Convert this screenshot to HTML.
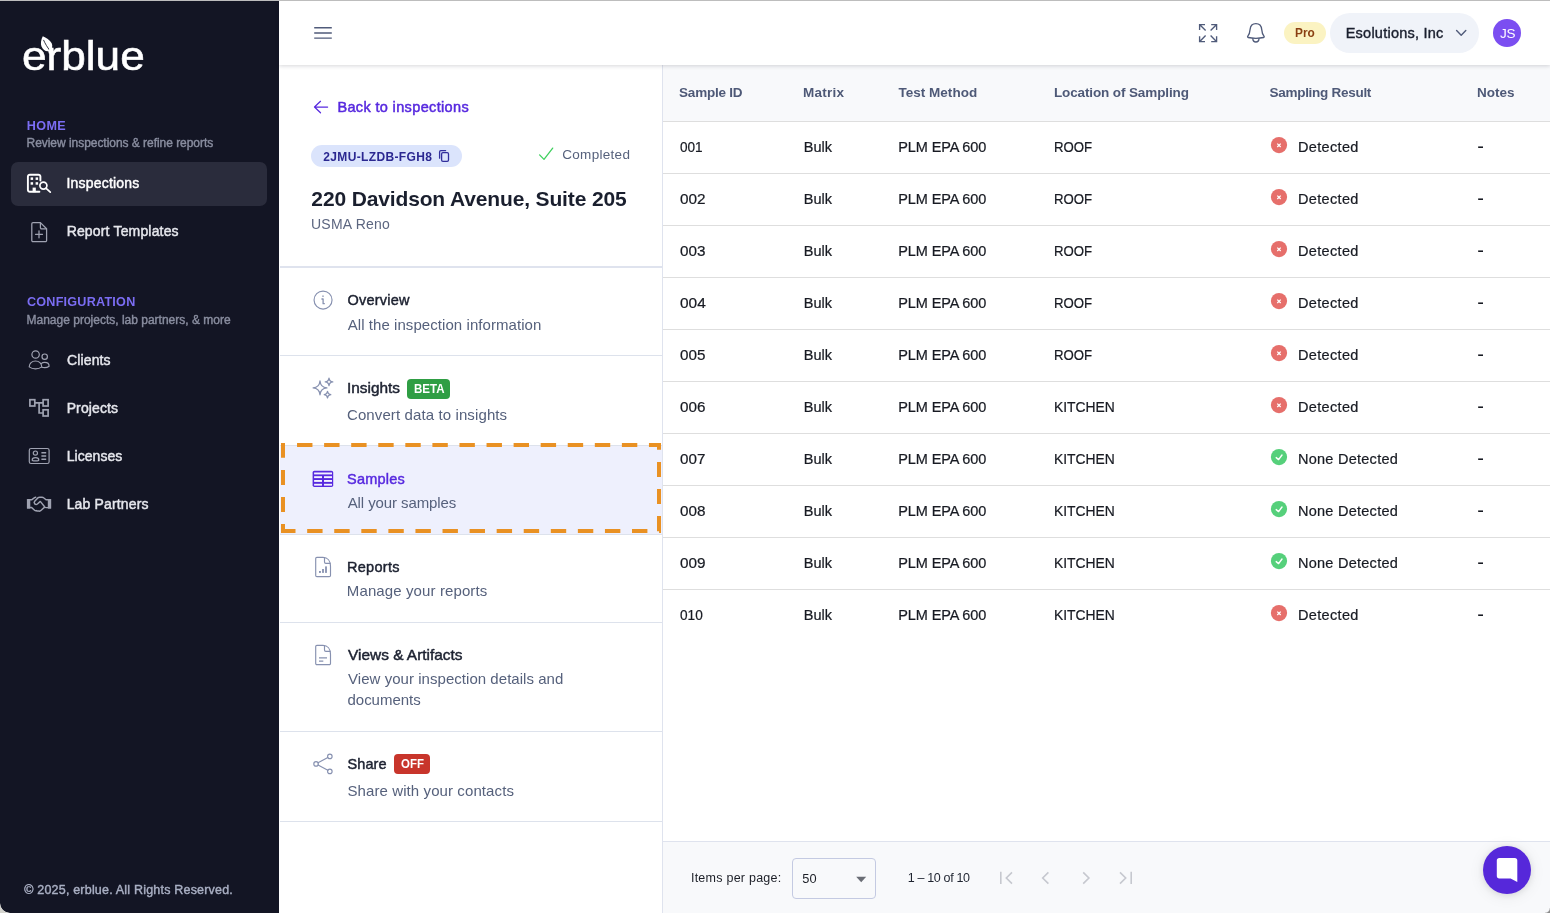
<!DOCTYPE html>
<html lang="en">
<head>
<meta charset="utf-8">
<title>erblue - Samples</title>
<style>
*{box-sizing:border-box;margin:0;padding:0}
html,body{width:1550px;height:913px;overflow:hidden;background:#fff}
body{font-family:"Liberation Sans",sans-serif;color:#1f2430;position:relative}
.abs{position:absolute}
.t{position:absolute;white-space:nowrap;line-height:1}
#txt{position:absolute;left:0;top:0;width:1550px;height:913px;will-change:transform;z-index:20}
svg{position:absolute;overflow:visible}
#topline{left:0;top:0;width:1550px;height:1px;background:#bdbdbd;z-index:50}
#sidebar{left:0;top:1px;width:279px;height:912px;background:#131524;border-radius:0 0 0 10px}
#active{left:11px;top:162px;width:256px;height:44px;border-radius:7px;background:#2a2c3c}
#topbar{left:279px;top:1px;width:1271px;height:64px;background:#fff;box-shadow:0 1px 4px rgba(10,12,30,.17);z-index:10}
#mid{left:279px;top:65px;width:384px;height:848px;background:#fff;border-right:1px solid #dfe3ee}
.hr{position:absolute;left:280px;width:382px;height:1px;background:#dde2ec}
#thead{left:663px;top:65px;width:887px;height:57px;background:#f8f9fb;border-bottom:1px solid #dedede}
.row{position:absolute;left:663px;width:887px;height:1px;background:#dedede}
#tfoot{left:663px;top:841px;width:887px;height:72px;background:#f8f9fb;border-top:1px solid #dfe3ee}
</style>
</head>
<body>
<div id="topline" class="abs"></div>
<!-- SIDEBAR -->
<div id="sidebar" class="abs"></div>
<div id="active" class="abs"></div>
<svg style="left:0;top:0" width="279" height="100" viewBox="0 0 279 100"><path d="M42.8 36.2 C46 37.4 50 39.9 51.7 43.2 C52.9 45.8 52.1 48.7 50.5 51 L50 53.6 L48.8 53.6 L48.3 51.3 C45.7 51.7 42.9 49.9 41.5 46.6 C40.3 43.6 41.1 39.4 42.8 36.2 Z" fill="#fff"/><path d="M43.5 39.9 C45.1 43.6 47.4 47.3 49.8 50.4" stroke="#131524" stroke-width="0.85" fill="none"/></svg>
<svg style="left:0;top:0" width="279" height="913" viewBox="0 0 279 913" fill="none" stroke-linecap="round" stroke-linejoin="round">
<!-- inspections -->
<g stroke="#fff" stroke-width="1.9">
<path d="M40.4 180.6 V176.6 a1.9 1.9 0 0 0 -1.9 -1.9 H29.8 a1.9 1.9 0 0 0 -1.9 1.9 V189.9 a1.9 1.9 0 0 0 1.9 1.9 H39.4"/>
<circle cx="43.4" cy="185.6" r="3.5" stroke-width="1.7"/>
<path d="M46.1 188.3 L50.3 192.2" stroke-width="1.7"/>
</g>
<g fill="#fff" stroke="none">
<rect x="30.6" y="177.4" width="2.5" height="2.5"/><rect x="35.6" y="177.4" width="2.5" height="2.5"/>
<rect x="30.6" y="182.2" width="2.5" height="2.5"/><rect x="35.6" y="182.2" width="2.5" height="2.5"/>
<rect x="32.6" y="187.6" width="3.2" height="4.6"/>
</g>
<!-- report templates -->
<g stroke="#9fa2b1" stroke-width="1.25">
<path d="M40.4 222.6 H33 a1.2 1.2 0 0 0 -1.2 1.2 V240.4 a1.2 1.2 0 0 0 1.2 1.2 H45.4 a1.2 1.2 0 0 0 1.2 -1.2 V228.8 Z"/>
<path d="M40.4 222.8 V227.6 a1.2 1.2 0 0 0 1.2 1.2 H46.4"/>
<path d="M39 230.8 V237.8 M35.5 234.3 H42.5"/>
</g>
<!-- clients -->
<g stroke="#9fa2b1" stroke-width="1.2">
<circle cx="35.6" cy="354.5" r="3.7"/>
<circle cx="44.7" cy="356.7" r="2.7"/>
<path d="M29.2 366.9 C29.2 363.4 32 361 35.5 361 C39 361 41.8 363.4 41.8 366.9 C40 368.3 37.8 368.9 35.5 368.9 C33.2 368.9 31 368.3 29.2 366.9 Z"/>
<path d="M41.2 363.6 C42.1 362.8 43.3 362.4 44.7 362.4 C47.3 362.4 49.1 364 49.1 366.2 C47.8 367.2 46.3 367.6 44.7 367.6 C43.6 367.6 42.7 367.5 41.9 367.2"/>
</g>
<!-- projects -->
<g stroke="#9fa2b1" stroke-width="1.7" stroke-linejoin="miter" stroke-linecap="butt">
<rect x="29.9" y="399.7" width="4.9" height="6.3"/>
<rect x="43.1" y="399.7" width="5" height="6.3"/>
<rect x="43.1" y="409.8" width="5" height="6.2"/>
<path d="M35 402.9 H43 M39.1 402.9 V413 H43"/>
</g>
<!-- licenses -->
<g stroke="#9fa2b1" stroke-width="1.2">
<rect x="29.3" y="448.5" width="19.8" height="15" rx="1.8"/>
<circle cx="35.4" cy="453.1" r="2.1"/>
<path d="M32.2 459.9 C32.2 458.6 33.7 457.7 35.5 457.7 C37.3 457.7 38.8 458.6 38.8 459.9 C38.8 460.6 37.3 460.9 35.5 460.9 C33.7 460.9 32.2 460.6 32.2 459.9 Z"/>
<path d="M41.4 452.7 H46.2 M41.4 456 H46.2 M41.4 459.2 H46.2" stroke-width="1.5" stroke-linecap="butt"/>
</g>
<!-- lab partners -->
<g stroke="#9fa2b1" stroke-width="1.45">
<path d="M30.2 499.8 H31.6 L34.6 497.6 Q35.2 497.25 35.7 497.2"/>
<path d="M48 499.8 H46 L43.6 497.8 Q43 497.2 42 497.2 H39.6 Q38.6 497.2 37.8 497.9 L34.7 501.2 Q33.6 502.6 34.7 503.9 Q36 505 37.4 504 L40.3 501.4 L44.2 506.2 Q44.8 507.4 46 507.6 H48"/>
<path d="M30.2 507.4 H31.4 L34.6 510.2 Q35.4 510.9 36.4 510.6 Q37.2 511.3 38.4 510.9 Q39.4 511.5 40.6 510.7 L44.4 507.4"/>
</g>
<g fill="#9fa2b1" stroke="none"><rect x="26.9" y="498.9" width="3.4" height="9.8" rx="0.5"/><rect x="47.8" y="498.9" width="3.4" height="9.8" rx="0.5"/></g>
</svg>
<!-- TOPBAR -->
<div id="topbar" class="abs"></div>
<div class="abs" style="z-index:11;left:1284px;top:22px;width:42px;height:22px;border-radius:11px;background:#fbf3c2"></div>
<div class="abs" style="z-index:11;left:1330px;top:13px;width:149px;height:40px;border-radius:20px;background:#f0f3f9"></div>
<div class="abs" style="z-index:11;left:1493px;top:19px;width:28px;height:28px;border-radius:14px;background:#7b4ef1"></div>
<svg style="left:279px;top:0;z-index:12" width="1271" height="65" viewBox="279 0 1271 65" fill="none" stroke-linecap="round" stroke-linejoin="round">
<path d="M314.2 27.7 H331.8 M314.2 32.9 H331.8 M314.2 38.1 H331.8" stroke="#505b7a" stroke-width="1.45" stroke-linecap="butt"/>
<g stroke="#505b7a" stroke-width="1.35" stroke-linecap="butt" stroke-linejoin="miter">
<path d="M1199.6 30 V24.6 H1205 M1199.8 24.8 L1205.6 30.6"/>
<path d="M1216.6 30 V24.6 H1211.2 M1216.4 24.8 L1210.6 30.6"/>
<path d="M1199.6 36.2 V41.6 H1205 M1199.8 41.4 L1205.6 35.6"/>
<path d="M1216.6 36.2 V41.6 H1211.2 M1216.4 41.4 L1210.6 35.6"/>
</g>
<g stroke="#505b7a" stroke-width="1.3">
<path d="M1255.9 23.6 C1252.4 23.6 1250.4 26 1250.1 29.4 C1249.9 32.4 1249.4 34.4 1247.7 36.4 C1247.4 36.9 1247.6 37.4 1248.2 37.5 C1250.8 38.1 1253.4 38.3 1255.9 38.3 C1258.4 38.3 1261 38.1 1263.6 37.5 C1264.2 37.4 1264.4 36.9 1264.1 36.4 C1262.4 34.4 1261.9 32.4 1261.7 29.4 C1261.4 26 1259.4 23.6 1255.9 23.6 Z"/>
<path d="M1252.8 38.6 C1252.9 40.6 1254.2 42 1255.9 42 C1257.6 42 1258.9 40.6 1259 38.6"/>
</g>
<path d="M1456.6 30.6 L1461.2 35.3 L1465.8 30.6" stroke="#505b7a" stroke-width="1.4"/>
</svg>
<!-- MID -->
<div id="mid" class="abs"></div>
<div class="abs" style="left:311px;top:145px;width:151px;height:22px;border-radius:11px;background:#dbe4fc"></div>
<div class="hr" style="top:266px;height:2px;background:#dfe3ee"></div>
<div class="hr" style="top:355px"></div>
<div class="hr" style="top:445px"></div>
<div class="hr" style="top:534px"></div>
<div class="hr" style="top:622px"></div>
<div class="hr" style="top:731px"></div>
<div class="hr" style="top:821px"></div>
<div class="abs" style="left:280px;top:446px;width:382px;height:88px;background:#eef0fd"></div>
<svg style="left:0;top:0" width="1550" height="913" viewBox="0 0 1550 913"><path d="M297.05 443.00h15.40v4.00h-15.40zM324.12 443.00h15.40v4.00h-15.40zM351.19 443.00h15.40v4.00h-15.40zM378.26 443.00h15.40v4.00h-15.40zM405.33 443.00h15.40v4.00h-15.40zM432.40 443.00h15.40v4.00h-15.40zM459.47 443.00h15.40v4.00h-15.40zM486.54 443.00h15.40v4.00h-15.40zM513.61 443.00h15.40v4.00h-15.40zM540.68 443.00h15.40v4.00h-15.40zM567.75 443.00h15.40v4.00h-15.40zM594.82 443.00h15.40v4.00h-15.40zM621.89 443.00h15.40v4.00h-15.40zM648.96 443.00h12.04v4.00h-12.04zM281.00 529.00h14.50v4.00h-14.50zM307.17 529.00h15.40v4.00h-15.40zM334.24 529.00h15.40v4.00h-15.40zM361.31 529.00h15.40v4.00h-15.40zM388.38 529.00h15.40v4.00h-15.40zM415.45 529.00h15.40v4.00h-15.40zM442.52 529.00h15.40v4.00h-15.40zM469.59 529.00h15.40v4.00h-15.40zM496.66 529.00h15.40v4.00h-15.40zM523.73 529.00h15.40v4.00h-15.40zM550.80 529.00h15.40v4.00h-15.40zM577.87 529.00h15.40v4.00h-15.40zM604.94 529.00h15.40v4.00h-15.40zM632.01 529.00h15.40v4.00h-15.40zM659.08 529.00h1.92v4.00h-1.92zM281.00 443.00h4.00v14.70h-4.00zM281.00 469.90h4.00v15.10h-4.00zM281.00 496.90h4.00v15.10h-4.00zM281.00 524.00h4.00v9.00h-4.00zM657.00 443.00h4.00v6.80h-4.00zM657.00 462.10h4.00v14.80h-4.00zM657.00 489.10h4.00v14.90h-4.00zM657.00 516.00h4.00v15.30h-4.00z" fill="#e99123"/></svg>
<div class="abs" style="left:407px;top:379px;width:43px;height:20px;border-radius:4px;background:#2f9e44"></div>
<div class="abs" style="left:394px;top:754px;width:36px;height:20px;border-radius:4px;background:#c8352b"></div>
<svg style="left:0;top:0" width="1550" height="913" viewBox="0 0 1550 913" fill="none" stroke-linecap="round" stroke-linejoin="round">
<path d="M327.6 107.05 H314.6 M320.5 101.3 L314.5 107.05 L320.5 112.8" stroke="#5729df" stroke-width="1.25"/>
<g stroke="#312e9c" stroke-width="1.3">
<rect x="441.6" y="152.6" width="6.9" height="8.7" rx="1.3"/>
<path d="M439.6 158.2 V151.9 a1.2 1.2 0 0 1 1.2 -1.2 H445.6"/>
</g>
<path d="M539.6 154.9 L544 159.4 L552.7 148.1" stroke="#3fd05e" stroke-width="1.3"/>
<g stroke="#8791b0" stroke-width="1.15">
<circle cx="323.05" cy="300.05" r="9"/>
<path d="M321.9 299 H323.1 V303.7 H324.3" stroke-width="1.3"/>
<path d="M323 296 V296.4" stroke-width="1.3"/>
<path d="M320 381.0 Q320.55 387.35 326.9 387.9 Q320.55 388.45 320 394.79999999999995 Q319.45 388.45 313.1 387.9 Q319.45 387.35 320 381.0 Z" stroke-width="1.3"/>
<path d="M329 378.09999999999997 Q329.38 381.52 332.8 381.9 Q329.38 382.28 329 385.7 Q328.62 382.28 325.2 381.9 Q328.62 381.52 329 378.09999999999997 Z" stroke-width="1.25"/>
<path d="M327.5 391.3 Q327.83 394.27 330.8 394.6 Q327.83 394.93 327.5 397.90000000000003 Q327.17 394.93 324.2 394.6 Q327.17 394.27 327.5 391.3 Z" stroke-width="1.25"/>
<path d="M316.9 557.35 H323 C327.6 557.35 330.5 561 330.5 566.4 V575.4 a1.2 1.2 0 0 1 -1.2 1.2 H316.9 a1.2 1.2 0 0 1 -1.2 -1.2 V558.55 a1.2 1.2 0 0 1 1.2 -1.2 Z"/><path d="M324.5 557.9 V562 a1.3 1.3 0 0 0 1.3 1.3 H329.9"/>
<path d="M316.9 645.35 H323 C327.6 645.35 330.5 649 330.5 654.4 V663.4 a1.2 1.2 0 0 1 -1.2 1.2 H316.9 a1.2 1.2 0 0 1 -1.2 -1.2 V646.55 a1.2 1.2 0 0 1 1.2 -1.2 Z"/><path d="M324.5 645.9 V650 a1.3 1.3 0 0 0 1.3 1.3 H329.9"/>
<path d="M319 657.9 H327 M319 661.1 H323.3" stroke-width="1.25" stroke-linecap="butt"/>
<circle cx="316.05" cy="763.9" r="2.25"/><circle cx="329.85" cy="756.4" r="2.25"/><circle cx="329.85" cy="771.4" r="2.25"/>
<path d="M318.05 762.8 L327.85 757.5 M318.05 765 L327.85 770.3"/>
</g>
<g fill="#8791b0"><rect x="319" y="571" width="1.9" height="1.9"/><rect x="322.1" y="569" width="1.8" height="3.9"/><rect x="325.1" y="566.4" width="1.8" height="6.5"/></g>
<!-- samples table icon -->
<rect x="312.6" y="470.8" width="20.6" height="16.2" rx="1.8" fill="#5729df"/>
<g fill="#f3f2ff"><rect x="314.1" y="472.5" width="17.9" height="1.9"/>
<rect x="314.1" y="476.2" width="7.9" height="1.9"/><rect x="324" y="476.2" width="8" height="1.9"/>
<rect x="314.1" y="480" width="7.9" height="1.9"/><rect x="324" y="480" width="8" height="1.9"/>
<rect x="314.1" y="483.8" width="7.9" height="1.8"/><rect x="324" y="483.8" width="8" height="1.8"/></g>
</svg>
<!-- TABLE -->
<div id="thead" class="abs"></div>
<div class="row" style="top:173px"></div>
<div class="row" style="top:225px"></div>
<div class="row" style="top:277px"></div>
<div class="row" style="top:329px"></div>
<div class="row" style="top:381px"></div>
<div class="row" style="top:433px"></div>
<div class="row" style="top:485px"></div>
<div class="row" style="top:537px"></div>
<div class="row" style="top:589px"></div>
<svg style="left:0;top:0" width="1550" height="913" viewBox="0 0 1550 913"><circle cx="1279" cy="145.1" r="8.1" fill="#e66f6b"/><path d="M1277.3 143.6 l3.4 3.4 M1280.7 143.6 l-3.4 3.4" stroke="#fff" stroke-width="1.3" fill="none"/><circle cx="1279" cy="197.1" r="8.1" fill="#e66f6b"/><path d="M1277.3 195.6 l3.4 3.4 M1280.7 195.6 l-3.4 3.4" stroke="#fff" stroke-width="1.3" fill="none"/><circle cx="1279" cy="249.1" r="8.1" fill="#e66f6b"/><path d="M1277.3 247.6 l3.4 3.4 M1280.7 247.6 l-3.4 3.4" stroke="#fff" stroke-width="1.3" fill="none"/><circle cx="1279" cy="301.1" r="8.1" fill="#e66f6b"/><path d="M1277.3 299.6 l3.4 3.4 M1280.7 299.6 l-3.4 3.4" stroke="#fff" stroke-width="1.3" fill="none"/><circle cx="1279" cy="353.1" r="8.1" fill="#e66f6b"/><path d="M1277.3 351.6 l3.4 3.4 M1280.7 351.6 l-3.4 3.4" stroke="#fff" stroke-width="1.3" fill="none"/><circle cx="1279" cy="405.1" r="8.1" fill="#e66f6b"/><path d="M1277.3 403.6 l3.4 3.4 M1280.7 403.6 l-3.4 3.4" stroke="#fff" stroke-width="1.3" fill="none"/><circle cx="1279" cy="457.1" r="8.1" fill="#56d07b"/><path d="M1276.2 457.6 l2.4 2 l3.4 -4.6" stroke="#fff" stroke-width="1.4" fill="none" stroke-linecap="round" stroke-linejoin="round"/><circle cx="1279" cy="509.1" r="8.1" fill="#56d07b"/><path d="M1276.2 509.6 l2.4 2 l3.4 -4.6" stroke="#fff" stroke-width="1.4" fill="none" stroke-linecap="round" stroke-linejoin="round"/><circle cx="1279" cy="561.1" r="8.1" fill="#56d07b"/><path d="M1276.2 561.6 l2.4 2 l3.4 -4.6" stroke="#fff" stroke-width="1.4" fill="none" stroke-linecap="round" stroke-linejoin="round"/><circle cx="1279" cy="613.1" r="8.1" fill="#e66f6b"/><path d="M1277.3 611.6 l3.4 3.4 M1280.7 611.6 l-3.4 3.4" stroke="#fff" stroke-width="1.3" fill="none"/></svg>
<div id="tfoot" class="abs"></div>
<div class="abs" style="left:792px;top:858px;width:84px;height:41px;border:1px solid #c4cae2;border-radius:4px"></div>
<svg style="left:0;top:0" width="1550" height="913" viewBox="0 0 1550 913" fill="none">
<path d="M856.2 876.8 h10 l-5 5.4z" fill="#6a6d75"/>
<g stroke="#c6c8cf" stroke-width="1.6">
<path d="M1000.8 871.8 V884 M1012 872.4 L1006.3 878 L1012 883.6"/>
<path d="M1048.4 872.4 L1042.7 878 L1048.4 883.6"/>
<path d="M1083.2 872.4 L1088.9 878 L1083.2 883.6"/>
<path d="M1120 872.4 L1125.7 878 L1120 883.6 M1131.2 871.8 V884"/>
</g>
</svg>
<div class="abs" style="left:1483px;top:846px;width:48px;height:48px;border-radius:24px;background:#5628da;box-shadow:0 1px 6px rgba(0,0,0,.10),0 2px 16px rgba(0,0,0,.08)"></div>
<svg style="left:0;top:0" width="1550" height="913" viewBox="0 0 1550 913"><path d="M1499.4 858 H1514.7 a2.6 2.6 0 0 1 2.6 2.6 V881.9 L1510.6 878.4 H1499.4 a2.6 2.6 0 0 1 -2.6 -2.6 V860.6 a2.6 2.6 0 0 1 2.6 -2.6 Z" fill="#fff"/></svg>
<div class="abs" style="left:0;top:903px;width:10px;height:10px;background:radial-gradient(circle at 10px 0,rgba(0,0,0,0) 9.5px,#d4d4ce 10.5px);z-index:60"></div>
<div class="abs" style="left:1545px;top:908px;width:5px;height:5px;background:radial-gradient(circle at 0 0,rgba(0,0,0,0) 4.2px,#8c8c8c 5.4px);z-index:60"></div>
<!-- TEXT LAYER -->
<div id="txt">
<div class="t" style="left:22.02px;top:35.94px;font-size:40px;color:#fff;-webkit-text-stroke:0.55px;transform:scaleX(1.1037);transform-origin:0 0;">erblue</div>
<div class="t" style="left:26.66px;top:119.53px;font-size:12.6px;color:#7b6df3;font-weight:700;letter-spacing:0.418px;">HOME</div>
<div class="t" style="left:26.52px;top:136.84px;font-size:12px;color:#8a8ea0;letter-spacing:-0.040px;-webkit-text-stroke:0.4px;">Review inspections &amp; refine reports</div>
<div class="t" style="left:26.98px;top:295.83px;font-size:12.6px;color:#7b6df3;font-weight:700;letter-spacing:0.238px;">CONFIGURATION</div>
<div class="t" style="left:26.52px;top:313.84px;font-size:12px;color:#8a8ea0;letter-spacing:0.000px;-webkit-text-stroke:0.4px;">Manage projects, lab partners, &amp; more</div>
<div class="t" style="left:66.51px;top:176.15px;font-size:14px;color:#ffffff;letter-spacing:0.197px;-webkit-text-stroke:0.45px;">Inspections</div>
<div class="t" style="left:66.65px;top:224.15px;font-size:14px;color:#e6e7ed;letter-spacing:0.166px;-webkit-text-stroke:0.45px;">Report Templates</div>
<div class="t" style="left:67.09px;top:353.15px;font-size:14px;color:#e6e7ed;letter-spacing:0.120px;-webkit-text-stroke:0.45px;">Clients</div>
<div class="t" style="left:66.65px;top:401.15px;font-size:14px;color:#e6e7ed;letter-spacing:0.125px;-webkit-text-stroke:0.45px;">Projects</div>
<div class="t" style="left:66.65px;top:449.15px;font-size:14px;color:#e6e7ed;letter-spacing:0.056px;-webkit-text-stroke:0.45px;">Licenses</div>
<div class="t" style="left:66.65px;top:497.15px;font-size:14px;color:#e6e7ed;letter-spacing:0.162px;-webkit-text-stroke:0.45px;">Lab Partners</div>
<div class="t" style="left:24.21px;top:884.42px;font-size:12.5px;color:#aab0c4;letter-spacing:0.198px;-webkit-text-stroke:0.4px;">© 2025, erblue. All Rights Reserved.</div>
<div class="t" style="left:1295.01px;top:27.25px;font-size:12.7px;color:#8a3f12;font-weight:700;transform:scaleX(0.9338);transform-origin:0 0;z-index:12;">Pro</div>
<div class="t" style="left:1345.71px;top:25.73px;font-size:14.5px;color:#1a1f2e;letter-spacing:0.240px;-webkit-text-stroke:0.4px;z-index:12;">Esolutions, Inc</div>
<div class="t" style="left:1499.89px;top:26.57px;font-size:13.5px;color:#fff;letter-spacing:-0.135px;z-index:12;">JS</div>
<div class="t" style="left:337.41px;top:99.53px;font-size:14.5px;color:#5729df;letter-spacing:0.354px;-webkit-text-stroke:0.5px;">Back to inspections</div>
<div class="t" style="left:323.28px;top:150.64px;font-size:12px;color:#2b2891;font-weight:700;letter-spacing:0.360px;">2JMU-LZDB-FGH8</div>
<div class="t" style="left:562.21px;top:148.17px;font-size:13.5px;color:#56617c;letter-spacing:0.307px;">Completed</div>
<div class="t" style="left:311.37px;top:188.42px;font-size:21px;color:#1a1f2e;font-weight:700;letter-spacing:-0.142px;">220 Davidson Avenue, Suite 205</div>
<div class="t" style="left:311.02px;top:217.15px;font-size:14px;color:#5c6680;letter-spacing:0.215px;">USMA Reno</div>
<div class="t" style="left:347.41px;top:292.63px;font-size:14.5px;color:#1c2130;letter-spacing:0.245px;-webkit-text-stroke:0.45px;">Overview</div>
<div class="t" style="left:347.67px;top:317.30px;font-size:15px;color:#56617c;letter-spacing:0.066px;">All the inspection information</div>
<div class="t" style="left:346.68px;top:380.93px;font-size:14.5px;color:#1c2130;-webkit-text-stroke:0.45px;transform:scaleX(1.0619);transform-origin:0 0;">Insights</div>
<div class="t" style="left:413.53px;top:382.30px;font-size:13px;color:#fff;font-weight:700;transform:scaleX(0.8879);transform-origin:0 0;">BETA</div>
<div class="t" style="left:346.94px;top:406.80px;font-size:15px;color:#56617c;letter-spacing:0.113px;">Convert data to insights</div>
<div class="t" style="left:347.04px;top:471.83px;font-size:14.5px;color:#5729df;letter-spacing:0.210px;-webkit-text-stroke:0.45px;">Samples</div>
<div class="t" style="left:347.67px;top:495.30px;font-size:15px;color:#56617c;letter-spacing:-0.092px;">All your samples</div>
<div class="t" style="left:346.91px;top:559.83px;font-size:14.5px;color:#1c2130;letter-spacing:0.322px;-webkit-text-stroke:0.45px;">Reports</div>
<div class="t" style="left:346.87px;top:583.30px;font-size:15px;color:#56617c;letter-spacing:0.109px;">Manage your reports</div>
<div class="t" style="left:348.03px;top:648.03px;font-size:14.5px;color:#1c2130;-webkit-text-stroke:0.45px;transform:scaleX(1.0632);transform-origin:0 0;">Views &amp; Artifacts</div>
<div class="t" style="left:348.03px;top:671.00px;font-size:15px;color:#56617c;letter-spacing:0.042px;">View your inspection details and</div>
<div class="t" style="left:347.47px;top:692.10px;font-size:15px;color:#56617c;letter-spacing:-0.013px;">documents</div>
<div class="t" style="left:347.44px;top:756.93px;font-size:14.5px;color:#1c2130;letter-spacing:0.125px;-webkit-text-stroke:0.45px;">Share</div>
<div class="t" style="left:401.03px;top:757.56px;font-size:12.8px;color:#fff;font-weight:700;transform:scaleX(0.8943);transform-origin:0 0;">OFF</div>
<div class="t" style="left:347.42px;top:783.00px;font-size:15px;color:#56617c;letter-spacing:0.099px;">Share with your contacts</div>
<div class="t" style="left:679.11px;top:85.57px;font-size:13.5px;color:#4e5977;font-weight:700;letter-spacing:-0.241px;">Sample ID</div>
<div class="t" style="left:803.00px;top:85.57px;font-size:13.5px;color:#4e5977;font-weight:700;letter-spacing:0.247px;">Matrix</div>
<div class="t" style="left:898.45px;top:85.57px;font-size:13.5px;color:#4e5977;font-weight:700;letter-spacing:0.024px;">Test Method</div>
<div class="t" style="left:1053.90px;top:85.57px;font-size:13.5px;color:#4e5977;font-weight:700;letter-spacing:-0.118px;">Location of Sampling</div>
<div class="t" style="left:1269.51px;top:85.57px;font-size:13.5px;color:#4e5977;font-weight:700;letter-spacing:-0.279px;">Sampling Result</div>
<div class="t" style="left:1477.10px;top:85.57px;font-size:13.5px;color:#4e5977;font-weight:700;letter-spacing:-0.015px;">Notes</div>
<div class="t" style="left:679.67px;top:139.63px;font-size:14.5px;color:#181b23;-webkit-text-stroke:0.22px;transform:scaleX(0.9377);transform-origin:0 0;">001</div>
<div class="t" style="left:803.81px;top:139.63px;font-size:14.5px;color:#181b23;letter-spacing:-0.017px;-webkit-text-stroke:0.22px;">Bulk</div>
<div class="t" style="left:898.21px;top:139.63px;font-size:14.5px;color:#181b23;letter-spacing:-0.105px;-webkit-text-stroke:0.22px;">PLM EPA 600</div>
<div class="t" style="left:1054.42px;top:139.63px;font-size:14.5px;color:#181b23;-webkit-text-stroke:0.22px;transform:scaleX(0.9098);transform-origin:0 0;">ROOF</div>
<div class="t" style="left:1297.91px;top:139.63px;font-size:14.5px;color:#181b23;letter-spacing:0.354px;-webkit-text-stroke:0.22px;">Detected</div>
<div class="t" style="left:1477.16px;top:135.77px;font-size:20px;color:#181b23;">-</div>
<div class="t" style="left:679.60px;top:191.63px;font-size:14.5px;color:#181b23;-webkit-text-stroke:0.22px;transform:scaleX(1.0564);transform-origin:0 0;">002</div>
<div class="t" style="left:803.81px;top:191.63px;font-size:14.5px;color:#181b23;letter-spacing:-0.017px;-webkit-text-stroke:0.22px;">Bulk</div>
<div class="t" style="left:898.21px;top:191.63px;font-size:14.5px;color:#181b23;letter-spacing:-0.105px;-webkit-text-stroke:0.22px;">PLM EPA 600</div>
<div class="t" style="left:1054.42px;top:191.63px;font-size:14.5px;color:#181b23;-webkit-text-stroke:0.22px;transform:scaleX(0.9098);transform-origin:0 0;">ROOF</div>
<div class="t" style="left:1297.91px;top:191.63px;font-size:14.5px;color:#181b23;letter-spacing:0.354px;-webkit-text-stroke:0.22px;">Detected</div>
<div class="t" style="left:1477.16px;top:187.77px;font-size:20px;color:#181b23;">-</div>
<div class="t" style="left:679.60px;top:243.63px;font-size:14.5px;color:#181b23;-webkit-text-stroke:0.22px;transform:scaleX(1.0522);transform-origin:0 0;">003</div>
<div class="t" style="left:803.81px;top:243.63px;font-size:14.5px;color:#181b23;letter-spacing:-0.017px;-webkit-text-stroke:0.22px;">Bulk</div>
<div class="t" style="left:898.21px;top:243.63px;font-size:14.5px;color:#181b23;letter-spacing:-0.105px;-webkit-text-stroke:0.22px;">PLM EPA 600</div>
<div class="t" style="left:1054.42px;top:243.63px;font-size:14.5px;color:#181b23;-webkit-text-stroke:0.22px;transform:scaleX(0.9098);transform-origin:0 0;">ROOF</div>
<div class="t" style="left:1297.91px;top:243.63px;font-size:14.5px;color:#181b23;letter-spacing:0.354px;-webkit-text-stroke:0.22px;">Detected</div>
<div class="t" style="left:1477.16px;top:239.77px;font-size:20px;color:#181b23;">-</div>
<div class="t" style="left:679.60px;top:295.63px;font-size:14.5px;color:#181b23;-webkit-text-stroke:0.22px;transform:scaleX(1.0641);transform-origin:0 0;">004</div>
<div class="t" style="left:803.81px;top:295.63px;font-size:14.5px;color:#181b23;letter-spacing:-0.017px;-webkit-text-stroke:0.22px;">Bulk</div>
<div class="t" style="left:898.21px;top:295.63px;font-size:14.5px;color:#181b23;letter-spacing:-0.105px;-webkit-text-stroke:0.22px;">PLM EPA 600</div>
<div class="t" style="left:1054.42px;top:295.63px;font-size:14.5px;color:#181b23;-webkit-text-stroke:0.22px;transform:scaleX(0.9098);transform-origin:0 0;">ROOF</div>
<div class="t" style="left:1297.91px;top:295.63px;font-size:14.5px;color:#181b23;letter-spacing:0.354px;-webkit-text-stroke:0.22px;">Detected</div>
<div class="t" style="left:1477.16px;top:291.77px;font-size:20px;color:#181b23;">-</div>
<div class="t" style="left:679.60px;top:347.63px;font-size:14.5px;color:#181b23;-webkit-text-stroke:0.22px;transform:scaleX(1.0509);transform-origin:0 0;">005</div>
<div class="t" style="left:803.81px;top:347.63px;font-size:14.5px;color:#181b23;letter-spacing:-0.017px;-webkit-text-stroke:0.22px;">Bulk</div>
<div class="t" style="left:898.21px;top:347.63px;font-size:14.5px;color:#181b23;letter-spacing:-0.105px;-webkit-text-stroke:0.22px;">PLM EPA 600</div>
<div class="t" style="left:1054.42px;top:347.63px;font-size:14.5px;color:#181b23;-webkit-text-stroke:0.22px;transform:scaleX(0.9098);transform-origin:0 0;">ROOF</div>
<div class="t" style="left:1297.91px;top:347.63px;font-size:14.5px;color:#181b23;letter-spacing:0.354px;-webkit-text-stroke:0.22px;">Detected</div>
<div class="t" style="left:1477.16px;top:343.77px;font-size:20px;color:#181b23;">-</div>
<div class="t" style="left:679.60px;top:399.63px;font-size:14.5px;color:#181b23;-webkit-text-stroke:0.22px;transform:scaleX(1.0522);transform-origin:0 0;">006</div>
<div class="t" style="left:803.81px;top:399.63px;font-size:14.5px;color:#181b23;letter-spacing:-0.017px;-webkit-text-stroke:0.22px;">Bulk</div>
<div class="t" style="left:898.21px;top:399.63px;font-size:14.5px;color:#181b23;letter-spacing:-0.105px;-webkit-text-stroke:0.22px;">PLM EPA 600</div>
<div class="t" style="left:1054.36px;top:399.63px;font-size:14.5px;color:#181b23;-webkit-text-stroke:0.22px;transform:scaleX(0.9546);transform-origin:0 0;">KITCHEN</div>
<div class="t" style="left:1297.91px;top:399.63px;font-size:14.5px;color:#181b23;letter-spacing:0.354px;-webkit-text-stroke:0.22px;">Detected</div>
<div class="t" style="left:1477.16px;top:395.77px;font-size:20px;color:#181b23;">-</div>
<div class="t" style="left:679.61px;top:451.63px;font-size:14.5px;color:#181b23;-webkit-text-stroke:0.22px;transform:scaleX(1.0477);transform-origin:0 0;">007</div>
<div class="t" style="left:803.81px;top:451.63px;font-size:14.5px;color:#181b23;letter-spacing:-0.017px;-webkit-text-stroke:0.22px;">Bulk</div>
<div class="t" style="left:898.21px;top:451.63px;font-size:14.5px;color:#181b23;letter-spacing:-0.105px;-webkit-text-stroke:0.22px;">PLM EPA 600</div>
<div class="t" style="left:1054.36px;top:451.63px;font-size:14.5px;color:#181b23;-webkit-text-stroke:0.22px;transform:scaleX(0.9546);transform-origin:0 0;">KITCHEN</div>
<div class="t" style="left:1297.91px;top:451.63px;font-size:14.5px;color:#181b23;letter-spacing:0.266px;-webkit-text-stroke:0.22px;">None Detected</div>
<div class="t" style="left:1477.16px;top:447.77px;font-size:20px;color:#181b23;">-</div>
<div class="t" style="left:679.60px;top:503.63px;font-size:14.5px;color:#181b23;-webkit-text-stroke:0.22px;transform:scaleX(1.0519);transform-origin:0 0;">008</div>
<div class="t" style="left:803.81px;top:503.63px;font-size:14.5px;color:#181b23;letter-spacing:-0.017px;-webkit-text-stroke:0.22px;">Bulk</div>
<div class="t" style="left:898.21px;top:503.63px;font-size:14.5px;color:#181b23;letter-spacing:-0.105px;-webkit-text-stroke:0.22px;">PLM EPA 600</div>
<div class="t" style="left:1054.36px;top:503.63px;font-size:14.5px;color:#181b23;-webkit-text-stroke:0.22px;transform:scaleX(0.9546);transform-origin:0 0;">KITCHEN</div>
<div class="t" style="left:1297.91px;top:503.63px;font-size:14.5px;color:#181b23;letter-spacing:0.266px;-webkit-text-stroke:0.22px;">None Detected</div>
<div class="t" style="left:1477.16px;top:499.77px;font-size:20px;color:#181b23;">-</div>
<div class="t" style="left:679.60px;top:555.63px;font-size:14.5px;color:#181b23;-webkit-text-stroke:0.22px;transform:scaleX(1.0545);transform-origin:0 0;">009</div>
<div class="t" style="left:803.81px;top:555.63px;font-size:14.5px;color:#181b23;letter-spacing:-0.017px;-webkit-text-stroke:0.22px;">Bulk</div>
<div class="t" style="left:898.21px;top:555.63px;font-size:14.5px;color:#181b23;letter-spacing:-0.105px;-webkit-text-stroke:0.22px;">PLM EPA 600</div>
<div class="t" style="left:1054.36px;top:555.63px;font-size:14.5px;color:#181b23;-webkit-text-stroke:0.22px;transform:scaleX(0.9546);transform-origin:0 0;">KITCHEN</div>
<div class="t" style="left:1297.91px;top:555.63px;font-size:14.5px;color:#181b23;letter-spacing:0.266px;-webkit-text-stroke:0.22px;">None Detected</div>
<div class="t" style="left:1477.16px;top:551.77px;font-size:20px;color:#181b23;">-</div>
<div class="t" style="left:679.67px;top:607.63px;font-size:14.5px;color:#181b23;-webkit-text-stroke:0.22px;transform:scaleX(0.9406);transform-origin:0 0;">010</div>
<div class="t" style="left:803.81px;top:607.63px;font-size:14.5px;color:#181b23;letter-spacing:-0.017px;-webkit-text-stroke:0.22px;">Bulk</div>
<div class="t" style="left:898.21px;top:607.63px;font-size:14.5px;color:#181b23;letter-spacing:-0.105px;-webkit-text-stroke:0.22px;">PLM EPA 600</div>
<div class="t" style="left:1054.36px;top:607.63px;font-size:14.5px;color:#181b23;-webkit-text-stroke:0.22px;transform:scaleX(0.9546);transform-origin:0 0;">KITCHEN</div>
<div class="t" style="left:1297.91px;top:607.63px;font-size:14.5px;color:#181b23;letter-spacing:0.354px;-webkit-text-stroke:0.22px;">Detected</div>
<div class="t" style="left:1477.16px;top:603.77px;font-size:20px;color:#181b23;">-</div>
<div class="t" style="left:690.95px;top:871.92px;font-size:12.5px;color:#1c1f27;letter-spacing:0.245px;">Items per page:</div>
<div class="t" style="left:802.29px;top:872.66px;font-size:12.8px;color:#1c1f27;letter-spacing:0.078px;">50</div>
<div class="t" style="left:907.65px;top:872.12px;font-size:12.5px;color:#1f2430;letter-spacing:-0.336px;">1 – 10 of 10</div>
</div>
</body>
</html>
